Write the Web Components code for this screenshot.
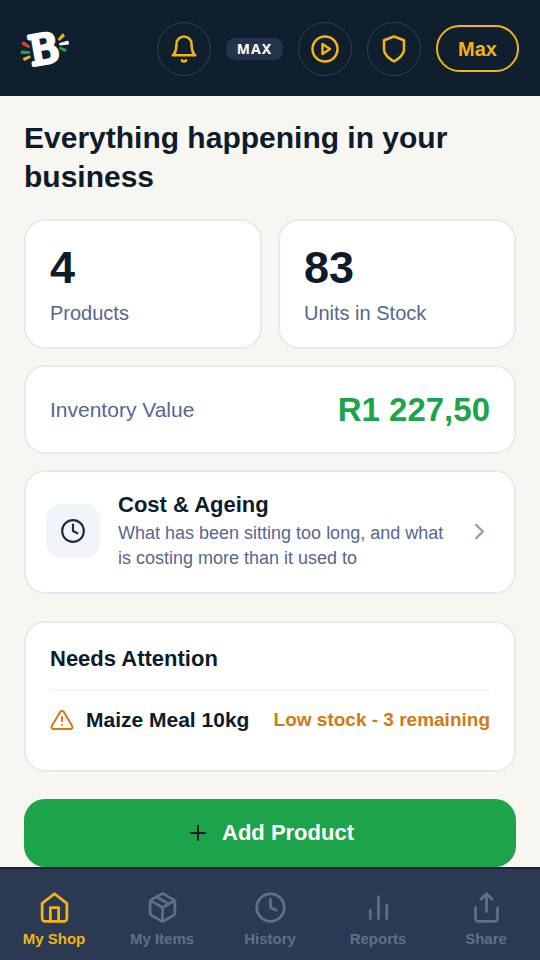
<!DOCTYPE html>
<html lang="en">
<head>
<meta charset="utf-8">
<meta name="viewport" content="width=device-width, initial-scale=1">
<title>My Shop</title>
<style>
  :root {
    --ink: #0d1b2a;
    --header: #0f1f2e;
    --nav: #2c3953;
    --nav-muted: #5f6f8a;
    --gold: #f2b417;
    --green: #1da44a;
    --muted: #56678a;
    --line: #e5eaf2;
    --amber: #d07a10;
    --page: #f7f6f0;
  }
  body {
    margin: 0;
    background: var(--page);
    color: var(--ink);
    font-family: "Liberation Sans", Arial, sans-serif;
  }
</style>
</head>
<body>
<shop-app></shop-app>

<script>
const ICONS = {
  bell: '<path d="M18 8A6 6 0 0 0 6 8c0 7-3 9-3 9h18s-3-2-3-9"/><path d="M13.73 21a2 2 0 0 1-3.46 0"/>',
  play: '<circle cx="12" cy="12" r="10"/><polygon points="10 8 16 12 10 16"/>',
  shield: '<path d="M12 22s8-4 8-10V5l-8-3-8 3v7c0 6 8 10 8 10z"/>',
  clock: '<circle cx="12" cy="12" r="10"/><polyline points="12 6 12 12 16 14"/>',
  chevron: '<polyline points="9 18 15 12 9 6"/>',
  alert: '<path d="M10.29 3.86L1.82 18a2 2 0 0 0 1.71 3h16.94a2 2 0 0 0 1.71-3L13.71 3.86a2 2 0 0 0-3.42 0z"/><path d="M12 9v4M12 17h.01"/>',
  plus: '<path d="M12 5v14M5 12h14"/>',
  home: '<path d="M3 9l9-7 9 7v11a2 2 0 0 1-2 2H5a2 2 0 0 1-2-2z"/><polyline points="9 22 9 12 15 12 15 22"/>',
  box: '<path d="M16.5 9.4L7.5 4.21"/><path d="M21 16V8a2 2 0 0 0-1-1.73l-7-4a2 2 0 0 0-2 0l-7 4A2 2 0 0 0 3 8v8a2 2 0 0 0 1 1.73l7 4a2 2 0 0 0 2 0l7-4A2 2 0 0 0 21 16z"/><polyline points="3.27 6.96 12 12.01 20.73 6.96"/><path d="M12 22.08V12"/>',
  bars: '<path d="M18 20V10M12 20V4M6 20v-6"/>',
  share: '<path d="M4 12v8a2 2 0 0 0 2 2h12a2 2 0 0 0 2-2v-8"/><polyline points="16 6 12 2 8 6"/><path d="M12 2v13"/>'
};

function define(name, render) {
  customElements.define(name, class extends HTMLElement {
    connectedCallback() {
      if (this.shadowRoot) return;
      const t = document.createElement('template');
      t.innerHTML = '<style>*{box-sizing:border-box}</style>' + render(this);
      this.attachShadow({ mode: 'open' }).append(t.content.cloneNode(true));
    }
  });
}

define('ui-icon', el => `
  <style>
    :host { display: inline-flex; flex: none; width: 24px; height: 24px; }
    svg { width: 100%; height: 100%; fill: none; stroke: currentColor; stroke-width: 2; stroke-linecap: round; stroke-linejoin: round; }
  </style>
  <svg viewBox="0 0 24 24" aria-hidden="true">${ICONS[el.getAttribute('name')]}</svg>`);

define('brand-logo', () => `
  <style>
    :host { display: block; flex: none; }
    a, svg { display: block; }
    svg { width: 50px; height: 60px; }
    text { font: 40px "DejaVu Serif", serif; fill: #fff; stroke: #fff; stroke-width: 4; stroke-linejoin: round; }
  </style>
  <a href="#home" aria-label="Home">
    <svg viewBox="0 -8 50 60" aria-hidden="true">
      <text x="9" y="36" transform="rotate(-10 24 22)">B</text>
      <g stroke-width="1.6" stroke-linejoin="round">
        <path fill="#e2402f" stroke="#e2402f" d="M2.4 16.8l1.2-1.6 5.6 4.2-.8 1z"/>
        <path fill="#22a457" stroke="#22a457" d="M1.6 24.4v1.8l7.8-.2v-1z"/>
        <path fill="#f2b41c" stroke="#f2b41c" d="M3.6 31.4l1 1.6 5.4-3-.4-.8z"/>
        <path fill="#f2b41c" stroke="#f2b41c" d="M38.6 12.2l.8.8 4.6-4.2-1.4-1.4z"/>
        <path fill="#fff" stroke="#fff" d="M40 16.8l.2 1 8-1-.4-2.2z"/>
        <path fill="#22a457" stroke="#22a457" d="M40 20.6l-.2.8 5.2 2.8.8-1.8z"/>
      </g>
    </svg>
  </a>`);

define('round-button', el => `
  <style>
    :host { display: block; flex: none; }
    button { display: grid; place-items: center; width: 54px; height: 54px; padding: 0; border: 1px solid #334152; border-radius: 50%; background: none; color: var(--gold); }
    ui-icon { width: 30px; height: 30px; }
  </style>
  <button type="button" aria-label="${el.getAttribute('label')}"><ui-icon name="${el.getAttribute('icon')}"></ui-icon></button>`);

define('app-header', () => `
  <style>
    :host { display: block; background: var(--header); }
    header { display: flex; align-items: center; justify-content: space-between; height: 96px; padding: 1px 21px 0 20px; }
    .tools { display: flex; align-items: center; gap: 15px; }
    .badge { display: block; width: 57px; border-radius: 9px; background: #25324b; color: #fff; font: bold 14px/22px "Noto Sans", sans-serif; letter-spacing: 1px; text-align: center; }
    .user { height: 47px; width: 83px; padding: 0; border: 2px solid var(--gold); border-radius: 24px; background: none; color: var(--gold); font: bold 20px/24px "Liberation Sans", Arial, sans-serif; }
  </style>
  <header>
    <brand-logo></brand-logo>
    <div class="tools">
      <round-button icon="bell" label="Notifications"></round-button>
      <span class="badge">MAX</span>
      <round-button icon="play" label="Tutorials"></round-button>
      <round-button icon="shield" label="Security"></round-button>
      <button class="user" type="button">Max</button>
    </div>
  </header>`);

define('ui-card', () => `
  <style>
    :host { display: block; border: 2px solid var(--line); border-radius: 21px; background: #fff; padding: 23px 24px; box-sizing: border-box; }
  </style>
  <slot></slot>`);

define('stat-card', () => `
  <style>
    :host { display: block; }
    .value { font-size: 45px; font-weight: bold; line-height: 48px; }
    .label { margin-top: 10px; font-size: 20px; line-height: 22px; color: var(--muted); }
  </style>
  <ui-card>
    <div class="value"><slot name="value"></slot></div>
    <div class="label"><slot></slot></div>
  </ui-card>`);

define('value-card', () => `
  <style>
    :host { display: block; }
    .row { display: flex; align-items: center; justify-content: space-between; gap: 12px; }
    .label { font-size: 21px; line-height: 26px; color: var(--muted); }
    .value { font-size: 33px; font-weight: bold; line-height: 39px; color: var(--green); white-space: nowrap; }
  </style>
  <ui-card><div class="row">
    <span class="label"><slot></slot></span>
    <span class="value"><slot name="value"></slot></span>
  </div></ui-card>`);

define('link-card', el => `
  <style>
    :host { display: block; }
    ui-card { padding: 19px 21px 21px 20px; }
    a { display: flex; align-items: center; gap: 18px; color: inherit; text-decoration: none; }
    .tile { display: grid; place-items: center; flex: none; width: 54px; height: 54px; border-radius: 15px; background: #f1f5f9; color: #1f2a44; }
    .tile ui-icon { width: 26px; height: 26px; }
    .text { flex: 1; }
    h2 { margin: 0 0 2px; font-size: 22px; line-height: 28px; }
    p { margin: 0; font-size: 18px; line-height: 25px; color: var(--muted); }
    .go { width: 27px; height: 27px; color: #8f9bb3; }
  </style>
  <ui-card><a href="${el.getAttribute('href')}">
    <span class="tile"><ui-icon name="clock"></ui-icon></span>
    <div class="text"><h2><slot name="title"></slot></h2><p><slot></slot></p></div>
    <ui-icon class="go" name="chevron"></ui-icon>
  </a></ui-card>`);

define('attention-item', () => `
  <style>
    :host { display: flex; align-items: center; gap: 12px; padding: 16px 0 14px; border-top: 2px solid #f4f7fa; line-height: 26px; }
    ui-icon { color: var(--amber); }
    .name { flex: 1; font-size: 21px; font-weight: bold; white-space: nowrap; }
    .note { font-size: 19px; font-weight: bold; color: var(--amber); white-space: nowrap; }
  </style>
  <ui-icon name="alert"></ui-icon>
  <span class="name"><slot></slot></span>
  <span class="note"><slot name="note"></slot></span>`);

define('attention-card', () => `
  <style>
    :host { display: block; }
    h2 { margin: 0 0 18px; font-size: 22px; line-height: 25px; }
  </style>
  <ui-card><h2><slot name="title"></slot></h2><slot></slot></ui-card>`);

define('primary-button', () => `
  <style>
    :host { display: block; }
    button { display: flex; align-items: center; justify-content: center; gap: 12px; width: 100%; padding: 20px; border: 0; border-radius: 21px; background: var(--green); color: #fff; font: bold 22px/28px "Liberation Sans", Arial, sans-serif; }
    ui-icon { color: var(--ink); }
  </style>
  <button type="button"><ui-icon name="plus"></ui-icon><span><slot></slot></span></button>`);

define('nav-tab', el => `
  <style>
    :host { display: block; flex: 1; }
    a { display: flex; flex-direction: column; align-items: center; gap: 5px; padding: 22px 0 11px; color: var(--nav-muted); font-size: 15px; font-weight: bold; line-height: 20px; text-decoration: none; }
    :host([active]) a { color: var(--gold); }
    ui-icon { width: 33px; height: 33px; }
  </style>
  <a href="${el.getAttribute('href')}"${el.hasAttribute('active') ? ' aria-current="page"' : ''}><ui-icon name="${el.getAttribute('icon')}"></ui-icon><span><slot></slot></span></a>`);

define('tab-bar', () => `
  <style>
    :host { display: block; position: sticky; bottom: 0; background: var(--nav); border-top: 2px solid #15233a; }
    nav { display: flex; }
  </style>
  <nav aria-label="Main">
    <nav-tab icon="home" href="#shop" active>My Shop</nav-tab>
    <nav-tab icon="box" href="#items">My Items</nav-tab>
    <nav-tab icon="clock" href="#history">History</nav-tab>
    <nav-tab icon="bars" href="#reports">Reports</nav-tab>
    <nav-tab icon="share" href="#share">Share</nav-tab>
  </nav>`);

define('shop-app', () => `
  <style>
    :host { display: flex; flex-direction: column; min-height: 100vh; }
    main { flex: 1; padding: 22px 24px 0; }
    h1 { margin: 0 0 23px; font-size: 30px; line-height: 39px; }
    .cards { display: grid; gap: 16px; }
    .pair { display: grid; grid-template-columns: 1fr 1fr; gap: 16px; }
    attention-card, primary-button { margin-top: 27px; }
  </style>
  <app-header></app-header>
  <main>
    <h1>Everything happening in your business</h1>
    <div class="cards">
      <div class="pair">
        <stat-card><span slot="value">4</span>Products</stat-card>
        <stat-card><span slot="value">83</span>Units in Stock</stat-card>
      </div>
      <value-card>Inventory Value<span slot="value">R1 227,50</span></value-card>
      <link-card href="#ageing"><span slot="title">Cost &amp; Ageing</span>What has been sitting too long, and what is costing more than it used to</link-card>
    </div>
    <attention-card>
      <span slot="title">Needs Attention</span>
      <attention-item>Maize Meal 10kg<span slot="note">Low stock - 3 remaining</span></attention-item>
    </attention-card>
    <primary-button>Add Product</primary-button>
  </main>
  <tab-bar></tab-bar>`);
</script>
</body>
</html>
